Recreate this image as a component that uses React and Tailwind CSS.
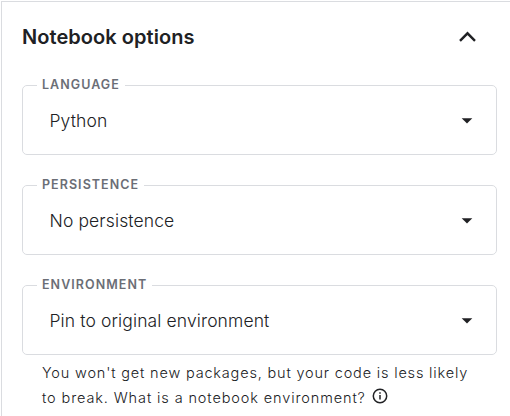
const options = [
  { label: "Language", value: "Python" },
  { label: "Persistence", value: "No persistence" },
  { label: "Environment", value: "Pin to original environment" },
];

function SelectField({ label, value }) {
  return (
    <fieldset className="h-[78px] rounded-[5px] border border-[#dadce0] pl-[14px]">
      <legend className="h-4 px-[5px] text-[12.5px] leading-4 font-semibold tracking-[1.05px] uppercase text-[#6b6e76]">
        {label}
      </legend>
      <button className="flex h-[56px] w-full items-center justify-between pr-[23px] pl-[12.5px] text-left text-[17.5px] font-light tracking-[0.12px] text-[#202124]">
        <span>{value}</span>
        <svg width="12" height="6" viewBox="0 0 12 6" aria-hidden="true">
          <path d="M0.7 0.3h10.6L6 5.6z" fill="#202124" />
        </svg>
      </button>
    </fieldset>
  );
}

export default function App() {
  return (
    <div className="h-[416px] w-[510px] overflow-hidden bg-white pt-px pl-px font-['Inter',sans-serif]">
      <section className="h-full border-t border-l border-[#dadce0] pr-[13px] pl-5">
        <header className="flex h-[75px] items-start justify-between pt-5 pr-[21px]">
          <h2 className="text-[20px] leading-[30px] font-semibold tracking-[0.05px] text-[#202124]">
            Notebook options
          </h2>
          <button className="mt-[9px]" aria-label="Collapse">
            <svg width="17" height="11" viewBox="0 0 17 11" aria-hidden="true">
              <path
                d="M1 9.8L8.5 2.3L16 9.8"
                fill="none"
                stroke="#202124"
                strokeWidth="2.4"
              />
            </svg>
          </button>
        </header>

        <div className="flex flex-col gap-[22px]">
          {options.map((option) => (
            <SelectField key={option.label} {...option} />
          ))}
        </div>

        <p className="mt-[5px] pl-5 text-[14.5px] leading-[25px] font-light tracking-[0.82px] whitespace-nowrap text-[#202124]">
          You won't get new packages, but your code is less likely
          <br />
          <span className="tracking-[0.88px]">
            to break. What is a notebook environment?
          </span>
          <svg
            className="ml-[6px] inline-block align-[-1px]"
            width="16"
            height="16"
            viewBox="0 0 16 16"
            aria-hidden="true"
          >
            <circle cx="8" cy="8" r="6.7" fill="none" stroke="#202124" strokeWidth="1.5" />
            <path d="M8 7v4.5M8 4.2v1.5" stroke="#202124" strokeWidth="1.5" />
          </svg>
        </p>
      </section>
    </div>
  );
}
